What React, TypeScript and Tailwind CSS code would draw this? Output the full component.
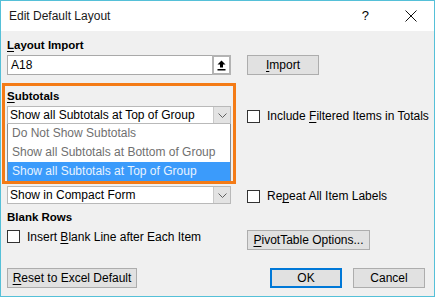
import React from "react";

function Checkbox() {
  return <div className="w-[13px] h-[13px] border border-[#333333] bg-white shrink-0" />;
}

function Chevron() {
  return (
    <svg width="9" height="5" viewBox="0 0 9 5" className="block">
      <path d="M0.5 0.5 L4.5 4.5 L8.5 0.5" fill="none" stroke="#606060" strokeWidth="1" />
    </svg>
  );
}

function Select({ text }: { text: string }) {
  return (
    <div className="w-[224px] h-[18px] border border-[#b9b9b9] bg-white flex items-stretch">
      <div className="flex-1 pl-[2px] leading-[16px] whitespace-nowrap">{text}</div>
      <div className="w-[17px] bg-[#e3e3e3] border-l border-[#c9c9c9] flex items-center justify-center">
        <Chevron />
      </div>
    </div>
  );
}

function Btn({ children, w, className = "" }: { children: React.ReactNode; w: string; className?: string }) {
  return (
    <div
      className={`${w} h-[20px] border border-[#adadad] bg-[#e1e1e1] flex items-center justify-center leading-none whitespace-nowrap ${className}`}
    >
      {children}
    </div>
  );
}

export default function App() {
  return (
    <div className="w-[435px] h-[297px] border border-[#55c0d8] bg-[#f0f0f0] flex flex-col overflow-hidden text-[12px] text-black font-['Liberation_Sans',Arial,sans-serif]">
      {/* Title bar */}
      <div className="h-[30px] shrink-0 bg-white flex items-center pl-[8px]">
        <span className="text-[12px] text-[#1a1a1a]">Edit Default Layout</span>
        <span className="ml-auto mr-[36px] text-[13px]">?</span>
        <svg width="12" height="12" viewBox="0 0 12 12" className="mr-[17px]">
          <path d="M0.5 0.5 L11.5 11.5 M11.5 0.5 L0.5 11.5" stroke="#111" strokeWidth="1" />
        </svg>
      </div>

      {/* Body */}
      <div className="flex flex-col pl-[6px]">
        <div className="mt-[6px] leading-[16px] font-bold text-[11.5px]">
          <span className="underline underline-offset-2">L</span>ayout Import
        </div>
        <div className="mt-[2px] flex items-start">
          <div className="w-[224px] h-[20px] border border-[#a9a9a9] bg-white flex items-stretch">
            <div className="flex-1 pl-[3px] leading-[18px]">A18</div>
            <div className="w-[19px] border-2 border-[#b3b3b3] bg-white flex items-center justify-center -my-[1px] -mr-[1px]">
              <svg width="9" height="11" viewBox="0 0 9 11">
                <path d="M4.5 0.5 L8.5 4.5 L6 4.5 L6 7.5 L3 7.5 L3 4.5 L0.5 4.5 Z" fill="#000" />
                <rect x="0.5" y="9" width="8" height="1.5" fill="#000" />
              </svg>
            </div>
          </div>
          <Btn w="w-[72px]" className="ml-[16px]">
            <span>
              <span className="underline underline-offset-2">I</span>mport
            </span>
          </Btn>
        </div>

        {/* Subtotals highlighted group */}
        <div className="mt-[8px] flex items-start">
          <div className="-ml-[5px] w-[234px] border-[3px] border-[#f47b16] px-[2px] pt-[2px] flex flex-col">
            <div className="leading-[16px] font-bold text-[11.5px]">
              <span className="underline underline-offset-2">S</span>ubtotals
            </div>
            <div className="mt-[2px]">
              <Select text="Show all Subtotals at Top of Group" />
            </div>
            <div className="w-[224px] border-x border-[#8a8a8a] bg-white flex flex-col">
              <div className="h-[19px] pl-[4px] leading-[19px] text-[#707070] whitespace-nowrap">Do Not Show Subtotals</div>
              <div className="h-[19px] pl-[4px] leading-[19px] text-[#707070] whitespace-nowrap">Show all Subtotals at Bottom of Group</div>
              <div className="h-[19px] pl-[4px] leading-[19px] bg-[#3b9bfb] text-[#e8f3ff] whitespace-nowrap">Show all Subtotals at Top of Group</div>
            </div>
          </div>
          <div className="ml-[11px] mt-[24px] flex items-center">
            <Checkbox />
            <span className="ml-[7px] whitespace-nowrap">
              Include <span className="underline underline-offset-2">F</span>iltered Items in Totals
            </span>
          </div>
        </div>

        <div className="mt-[2px] flex items-start">
          <Select text="Show in Compact Form" />
          <div className="ml-[16px] mt-[1px] flex items-center">
            <Checkbox />
            <span className="ml-[7px] whitespace-nowrap">
              Re<span className="underline underline-offset-2">p</span>eat All Item Labels
            </span>
          </div>
        </div>

        <div className="mt-[4px] leading-[16px] font-bold text-[11.5px]">Blank Rows</div>

        <div className="mt-[5px] flex items-start">
          <div className="w-[224px] flex items-center h-[13px]">
            <Checkbox />
            <span className="ml-[7px] whitespace-nowrap">
              Insert <span className="underline underline-offset-2">B</span>lank Line after Each Item
            </span>
          </div>
          <Btn w="w-[123px]" className="ml-[16px]">
            <span>
              <span className="underline underline-offset-2">P</span>ivotTable Options...
            </span>
          </Btn>
        </div>

        <div className="mt-[18px] flex items-start">
          <Btn w="w-[130px]">
            <span>
              <span className="underline underline-offset-2">R</span>eset to Excel Default
            </span>
          </Btn>
          <div className="ml-auto mr-[9px] flex items-start gap-[11px]">
            <div className="w-[72px] h-[20px] border-2 border-[#0078d7] bg-[#e1e1e1] flex items-center justify-center leading-none">OK</div>
            <Btn w="w-[72px]">Cancel</Btn>
          </div>
        </div>
      </div>
    </div>
  );
}
